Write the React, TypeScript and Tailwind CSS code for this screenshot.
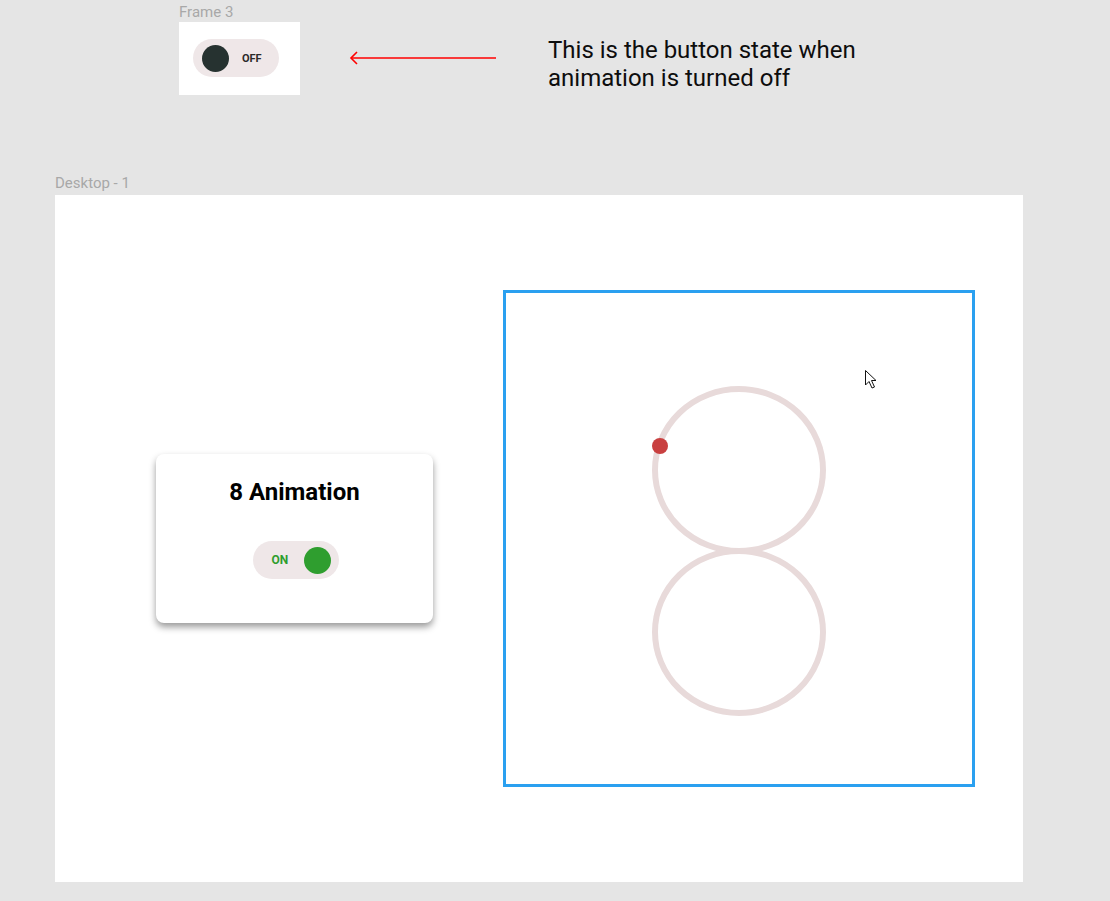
import React from "react";

function Toggle({ on }: { on: boolean }) {
  if (on) {
    return (
      <div className="flex h-[38px] w-[86px] items-center rounded-full bg-[#efe7e8] pl-[19px] pr-[8px]">
        <span className="text-[12px] font-bold leading-none text-[#2e9e2e]">ON</span>
        <div className="ml-auto h-[27px] w-[27px] rounded-full bg-[#2f9e2f]" />
      </div>
    );
  }
  return (
    <div className="flex h-[38px] w-[86px] items-center rounded-full bg-[#efe7e8] pl-[9px]">
      <div className="h-[27px] w-[27px] rounded-full bg-[#263230]" />
      <span className="ml-[13px] text-[11px] font-bold leading-none text-[#2b2b2b]">OFF</span>
    </div>
  );
}

export default function App() {
  return (
    <div
      className="flex h-[901px] w-[1110px] flex-col overflow-hidden bg-[#e5e5e5]"
      style={{ fontFamily: "Roboto, 'Liberation Sans', sans-serif" }}
    >
      {/* Top area */}
      <div className="flex flex-col pl-[179px] pt-[3px]">
        <div className="h-[18px] text-[15px] leading-[18px] text-[#a8a8a8]">Frame 3</div>
        <div className="mt-[1px] flex items-start">
          <div className="h-[73px] w-[121px] bg-white pl-[14px] pt-[17px]">
            <Toggle on={false} />
          </div>
          <svg className="ml-[49px] mt-[28px]" width="150" height="16" viewBox="0 0 150 16">
            <line x1="2" y1="8" x2="147" y2="8" stroke="#ff0000" strokeWidth="1.6" />
            <polyline points="8,2 2,8 8,14" fill="none" stroke="#ff0000" strokeWidth="1.6" />
          </svg>
          <div className="ml-[49px] mt-[14px] text-[24px] leading-[28px] text-[#0d0d0d]">
            This is the button state when
            <br />
            animation is turned off
          </div>
        </div>
      </div>

      {/* Desktop */}
      <div className="ml-[55px] mt-[79px] h-[18px] text-[15px] leading-[18px] text-[#a8a8a8]">Desktop - 1</div>
      <div className="ml-[55px] mt-[3px] flex h-[687px] w-[968px] items-start bg-white">
        <div className="ml-[101px] mt-[259px] flex h-[169px] w-[277px] flex-col items-center rounded-[8px] bg-white pt-[24px] shadow-[0_4px_7px_rgba(0,0,0,0.4)]">
          <div className="text-[24px] font-bold leading-[28px] text-black">8 Animation</div>
          <div className="mt-[35px] pl-[2px]">
            <Toggle on={true} />
          </div>
        </div>
        <div className="ml-[70px] mt-[95px] h-[497px] w-[472px] border-[3px] border-[#2aa0f0]">
          <svg width="466" height="491" viewBox="0 0 466 491">
            <ellipse cx="233" cy="177" rx="84" ry="81" fill="none" stroke="#e8dada" strokeWidth="6" />
            <ellipse cx="233" cy="339" rx="84" ry="81" fill="none" stroke="#e8dada" strokeWidth="6" />
            <circle cx="154" cy="153" r="8" fill="#c94040" />
            <path
              d="M359.5 77.5 L359.5 92 L363 88.5 L366 95 L368.5 94 L365.5 87.5 L370 87.5 Z"
              fill="white"
              stroke="#111"
              strokeWidth="1"
              strokeLinejoin="round"
            />
          </svg>
        </div>
      </div>
    </div>
  );
}
